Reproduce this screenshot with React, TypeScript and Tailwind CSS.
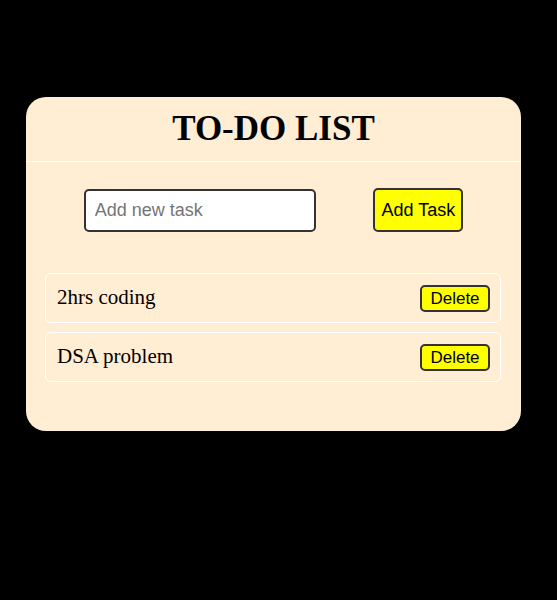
export default function App() {
  const tasks = ["2hrs coding", "DSA problem"];

  return (
    <div className="min-h-[600px] bg-black pt-[97px]">
      <div className="ml-[26px] w-[495px] h-[334px] bg-[#ffeed4] rounded-[20px] font-['Liberation_Serif',serif]">
        {/* Title */}
        <h1 className="h-[65px] flex items-center justify-center text-[35px] font-bold text-black border-b border-white pt-[1px]">
          TO-DO LIST
        </h1>

        {/* Input row */}
        <div className="flex justify-evenly items-center mt-[26px]">
          <input
            type="text"
            placeholder="Add new task"
            className="w-[232px] h-[43px] px-[9px] bg-white border-2 border-[#333] rounded-[5px] text-[18px] font-['Liberation_Sans',sans-serif] placeholder:text-[#757575] outline-none"
          />
          <button className="w-[90px] h-[44px] bg-[#ffff00] border-2 border-[#333] rounded-[5px] text-[18px] text-black font-['Liberation_Sans',sans-serif]">
            Add Task
          </button>
        </div>

        {/* Tasks */}
        <ul className="mt-[41px] ml-[19px] mr-[20px] flex flex-col gap-[9px]">
          {tasks.map((t) => (
            <li
              key={t}
              className="h-[50px] flex items-center justify-between pl-[11px] pr-[10px] border border-white rounded-[6px]"
            >
              <span className="text-[21px] text-black">{t}</span>
              <button className="w-[70px] h-[27px] bg-[#ffff00] border-2 border-[#333] rounded-[5px] text-[17px] leading-none text-black font-['Liberation_Sans',sans-serif]">
                Delete
              </button>
            </li>
          ))}
        </ul>
      </div>
    </div>
  );
}
